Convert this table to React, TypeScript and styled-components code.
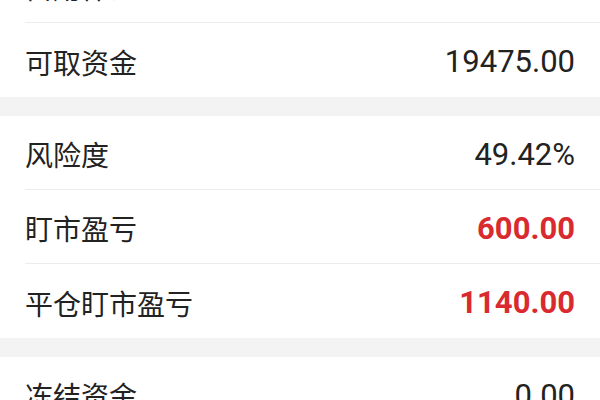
import React from "react";
import styled, { createGlobalStyle } from "styled-components";

const Global = createGlobalStyle`
  html, body { margin: 0; padding: 0; background: #f3f3f3; }
  body { font-family: "Noto Sans CJK SC", "Noto Sans", sans-serif; overflow: hidden; }
`;

const Screen = styled.div`
  width: 600px;
  height: 400px;
  overflow: hidden;
  background: #f3f3f3;
`;

const List = styled.div`
  margin-top: -51px;
  display: flex;
  flex-direction: column;
  gap: 19px;
`;

const Group = styled.section`
  background: #ffffff;
  display: flex;
  flex-direction: column;
`;

const Row = styled.div`
  height: 74px;
  box-sizing: border-box;
  padding-left: 25px;
  display: flex;
`;

const RowInner = styled.div<{ $divider: boolean }>`
  flex: 1;
  display: flex;
  align-items: center;
  justify-content: space-between;
  padding-right: 25px;
  padding-top: 3px;
  box-sizing: border-box;
  border-bottom: ${(p) => (p.$divider ? "1px solid #ececec" : "none")};
`;

const Label = styled.span`
  font-family: "Noto Sans CJK SC", sans-serif;
  font-size: 28px;
  color: #222222;
  line-height: 1;
`;

const Value = styled.span<{ $red?: boolean }>`
  font-family: Roboto, "Noto Sans", sans-serif;
  font-size: 31px;
  line-height: 1;
  font-weight: ${(p) => (p.$red ? 700 : 400)};
  color: ${(p) => (p.$red ? "#d92a2f" : "#222222")};
`;

type Item = { label: string; value: string; red?: boolean };

const groups: Item[][] = [
  [
    { label: "占用保证金", value: "19800.00" },
    { label: "可取资金", value: "19475.00" },
  ],
  [
    { label: "风险度", value: "49.42%" },
    { label: "盯市盈亏", value: "600.00", red: true },
    { label: "平仓盯市盈亏", value: "1140.00", red: true },
  ],
  [
    { label: "冻结资金", value: "0.00" },
    { label: "手续费", value: "0.00" },
  ],
];

export default function App() {
  return (
    <Screen>
      <Global />
      <List>
        {groups.map((g, gi) => (
          <Group key={gi}>
            {g.map((it, i) => (
              <Row key={it.label}>
                <RowInner $divider={i < g.length - 1}>
                  <Label>{it.label}</Label>
                  <Value $red={it.red}>{it.value}</Value>
                </RowInner>
              </Row>
            ))}
          </Group>
        ))}
      </List>
    </Screen>
  );
}
